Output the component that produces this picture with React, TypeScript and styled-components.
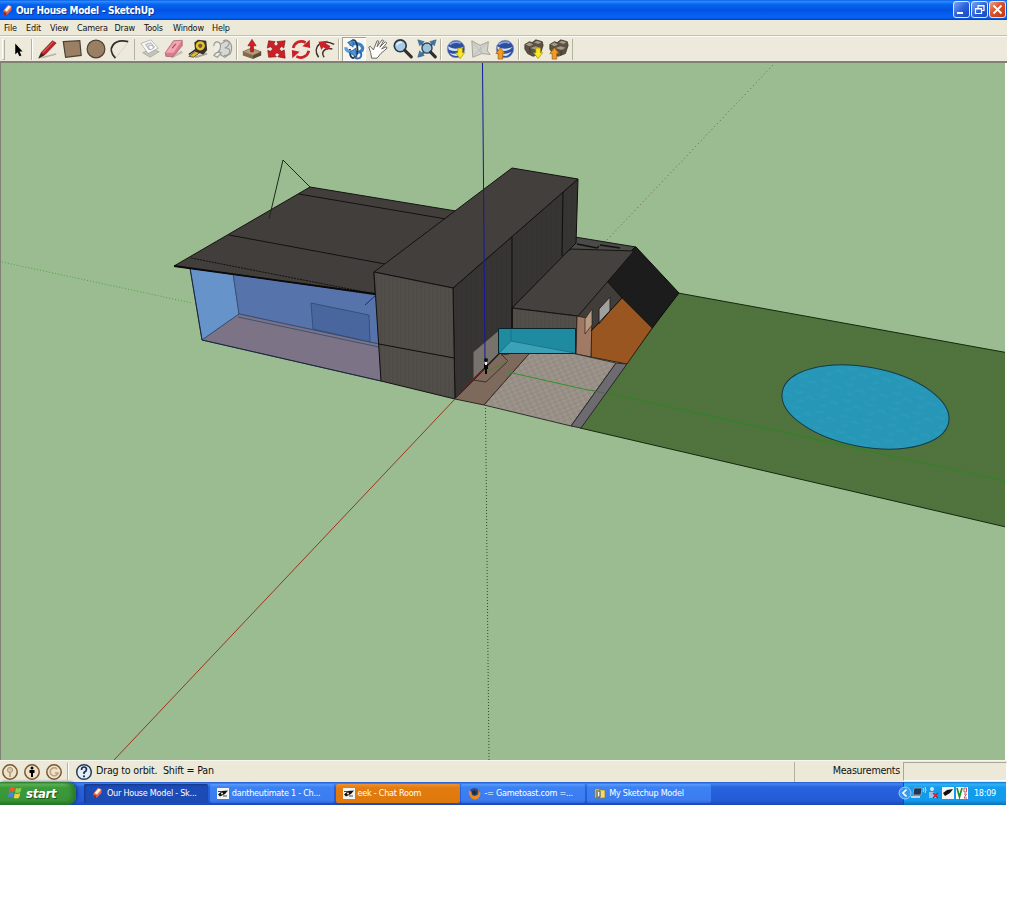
import React from 'react'
import styled, { createGlobalStyle, css } from 'styled-components'

const GlobalStyle = createGlobalStyle`
  * { box-sizing: border-box; }
  body { margin: 0; background: #fff; font-family: "DejaVu Sans Condensed", "DejaVu Sans", "Noto Sans", sans-serif; }
`

const Desktop = styled.div`
  width: 1007px;
  height: 805px;
  display: flex;
  flex-direction: column;
  overflow: hidden;
`

const TitleBar = styled.header`
  height: 20px;
  flex-shrink: 0;
  display: flex;
  align-items: center;
  background: linear-gradient(180deg, #0a5be0 0%, #2a8bff 7%, #0764ec 22%, #0054e3 50%, #0560f4 78%, #0564f8 88%, #023fb5 100%);
  padding: 0 1px 0 1px;
`

const Title = styled.h1`
  margin: 0 auto 0 2px;
  font-size: 10px;
  font-weight: 700;
  letter-spacing: -0.28px;
  color: #fff;
  text-shadow: 1px 1px 0 #0a318f;
  white-space: nowrap;
`

const WindowButtons = styled.div`display: flex; gap: 1px; padding-bottom: 1px;`

const WindowButton = styled.button<{ $close?: boolean }>`
  width: 17px; height: 17px; padding: 0;
  border: 1px solid #dce8ff;
  border-radius: 3px;
  background: ${({ $close }) => $close
    ? 'linear-gradient(135deg, #eba088, #d9512b 45%, #b83a16)'
    : 'linear-gradient(135deg, #7fa6f5, #2c62dc 50%, #1a48bd)'};
  svg { display: block; }
`

const MenuBar = styled.nav`
  height: 16px;
  flex-shrink: 0;
  display: flex;
  background: #ece9d8;
  border-bottom: 1px solid #c4c1b0;
  padding-left: 4px;
`

const MenuItem = styled.span<{ $w: number }>`
  width: ${({ $w }) => $w}px;
  font-size: 9px;
  line-height: 16px;
  letter-spacing: -0.18px;
  color: #111;
  white-space: nowrap;
`

const ToolBar = styled.div`
  height: 27px;
  flex-shrink: 0;
  display: flex;
  align-items: center;
  background: #edeadb;
  border-top: 1px solid #fbfaf4;
  border-bottom: 2px solid #7f8175;
`

const Grip = styled.i`
  width: 3px; height: 21px; margin: 0 1px 0 2px;
  border: 1px solid #fff; border-right-color: #b2ae9e; border-bottom-color: #b2ae9e;
`

const Tool = styled.button<{ $active?: boolean }>`
  width: 24.4px; height: 24px; padding: 0 0 1px; border: 0; background: none;
  display: flex; align-items: center; justify-content: center;
  ${({ $active }) => $active && css`
    background: #f8f7f1;
    box-shadow: inset 1px 1px 0 #a5a294, inset -1px -1px 0 #fff;
  `}
  svg { display: block; width: 22px; height: 22px; overflow: visible; }
`

const Separator = styled.i`
  width: 4.7px; height: 21px;
  background: linear-gradient(90deg, transparent 20%, #b5b1a1 20%, #b5b1a1 42%, #fff 42%, #fff 62%, transparent 62%);
`

const Viewport = styled.main`
  height: 697px; flex-shrink: 0;
  background: #9bbc90;
  border-left: 1px solid #7f8175;
  width: 1005px;
  overflow: hidden;
  svg { display: block; margin: -1px 0 0 -1px; }
`

const StatusBar = styled.footer`
  height: 22px; flex-shrink: 0;
  display: flex; align-items: center;
  background: #ece9d8;
  border-top: 1px solid #f7f5ec;
  font-size: 10px;
  color: #111;
  padding-left: 1px;
  svg { flex-shrink: 0; }
`

const StatusText = styled.span`
  margin: 0 0 3px 4px; font-family: "DejaVu Sans", sans-serif; font-size: 9.6px; letter-spacing: -0.22px; white-space: pre;
`

const StatusRule = styled.i`width: 1px; height: 17px; background: #b4b0a0; box-shadow: 1px 0 0 #fff;`

const Measure = styled.label`
  margin-left: auto; width: 213px; height: 20px;
  border-left: 1px solid #b4b0a0;
  display: flex; align-items: center; justify-content: flex-end; gap: 3px;
  font-family: "DejaVu Sans", sans-serif; font-size: 9.6px; letter-spacing: -0.3px;
  span { padding-bottom: 3px; }
`

const MeasureBox = styled.output`
  width: 104px; height: 19px;
  border: 1px solid #aaa799; border-right-color: #fff; border-bottom-color: #fff;
`

const TaskBar = styled.div`
  height: 23px; flex-shrink: 0;
  display: flex; width: 1006px;
  background: linear-gradient(180deg, #2458c8 0%, #4287f0 8%, #2862dc 22%, #245bd7 80%, #1b47b4 100%);
`

const StartButton = styled.button`
  width: 76px; height: 23px; border: 0; padding: 0 0 1px 7px;
  display: flex; align-items: center; gap: 3px;
  border-radius: 0 9px 9px 0;
  background: linear-gradient(180deg, #2f7e2f 0%, #63b85c 9%, #3b9a3a 25%, #379537 80%, #246e25 100%);
  box-shadow: inset -4px 0 4px #2c7a2b, 2px 0 3px #173f9d;
  font: italic 700 13px "DejaVu Sans Condensed", sans-serif;
  letter-spacing: -0.3px;
  color: #fff;
  text-shadow: 1px 1px 1px #1c501b;
  margin-right: 8px;
`

const Task = styled.button<{ $state?: 'active' | 'alert' }>`
  width: 124px; height: 19px; margin: 2px 1.8px 0 0; padding: 0 0 1px 7px;
  border: 0; border-radius: 2px;
  display: flex; align-items: center; gap: 3px;
  font: 9px "DejaVu Sans Condensed", sans-serif;
  letter-spacing: -0.25px;
  color: #fff;
  white-space: nowrap;
  background: linear-gradient(180deg, #5a9bff 0%, #3c81f3 18%, #3b7cf0 85%, #2f69d8 100%);
  ${({ $state }) => $state === 'active' && css`
    background: #1c4bb6;
    box-shadow: inset 1px 1px 2px #123586;
  `}
  ${({ $state }) => $state === 'alert' && css`
    background: linear-gradient(180deg, #ef9231 0%, #e27c10 20%, #e0790c 100%);
  `}
  svg { flex-shrink: 0; }
`

const Tray = styled.div`
  width: 103px; margin-left: auto; height: 23px;
  display: flex; align-items: center;
  background: linear-gradient(180deg, #0d76cf 0%, #32b2f5 9%, #139ceb 25%, #129bec 80%, #0c70ba 100%);
  border-left: 1px solid #0d52a8;
  font-size: 9px; letter-spacing: -0.3px; color: #fff;
  padding-bottom: 1px;
  svg { margin-left: -7px; overflow: visible; }
`

const Clock = styled.time`margin-left: 2px;`

const Crayon = () => (
  <svg width="13" height="14" viewBox="0 0 13 14">
    <path d="M2 8 7 1.800 10.500 3.300 10.500 7 5.500 12 2.500 11.500Z" fill="#df6b50" />
    <path d="M3.500 7 7.500 2.500 10 3.800 6 8.500Z" fill="#fff1e6" />
    <path d="M2 8.500 5.500 10 5 12.500 2.500 11.500Z" fill="#8e2a20" />
  </svg>
)

const ChatIcon = () => (
  <svg width="12" height="11" viewBox="0 0 12 11">
    <rect width="12" height="11" fill="#f5f5f2" />
    <path d="M1 6.500 5 3 11 2.500 8 6 3 8.500Z" fill="#111" />
    <path d="M1 3.500h4M6 8h4" stroke="#444" strokeWidth="1" />
    <circle cx="5" cy="5.500" r="1" fill="#eee" />
  </svg>
)

const Globe = () => (
  <>
    <circle cx="12" cy="12" r="9.500" fill="#2e4e9f" stroke="#8a93b0" strokeWidth=".7" />
    <path d="M3.500 9Q10 14 20.500 9.500 14 17 4 12.500ZM5 16q7 3 14-1-3 4-6 4.500-5 0-8-3.500Z" fill="#d7e5f8" />
    <path d="M5 7Q11 3 17 5.500" stroke="#83a6df" strokeWidth="2" fill="none" />
  </>
)

const DownArrow = () => <path d="M14 11h5v5h2.500l-5 6.500-5-6.500H14Z" fill="#fbe720" stroke="#9b8a12" strokeWidth=".7" />
const UpArrow = () => <path d="M4.500 23h5v-6H12L7 10.500 2 17h2.500Z" fill="#f49a20" stroke="#8e570f" strokeWidth=".7" />

const Boxes = () => (
  <>
    <path d="m2 7 5-3 3 1 4-3 7 2 1 4-3 9-8 3-6-3-3-5Z" fill="#5c5244" stroke="#332d25" strokeWidth=".8" />
    <path d="m3 7 4-2 4 2-4 2ZM12 5l3-2 5 1.500-3 2ZM8 11l6-2 5 1.500-4 2.500Z" fill="#a59a84" />
    <path d="m7 10 1 7M15 13l-1 6" stroke="#3c352b" />
  </>
)

type ToolDef = { name: string; art: React.ReactNode; active?: boolean }

const toolGroups: ToolDef[][] = [
  [
    { name: 'Select', art: <path d="M9 6v12l2.500-2.500 2 4.500 2.200-1-2-4.300H17Z" fill="#000" /> },
  ],
  [
    { name: 'Line', art: <><path d="m6 21.500 16-4" stroke="#b5b2a5" strokeWidth="1.500" /><path d="m3 22 3-6.500L18 3l4 2.500L10 18Z" fill="#c41f25" stroke="#671519" strokeWidth=".7" /><path d="m7.500 16 11.500-12" stroke="#ef7670" /><path d="m3 22 2.500-5.500L9 18.500Z" fill="#31271f" /></> },
    { name: 'Rectangle', art: <path d="m2.500 4 18-1 1.500 16-17 2Z" fill="#9b7f62" stroke="#4b4034" strokeWidth="1.300" /> },
    { name: 'Circle', art: <circle cx="12" cy="12" r="9.700" fill="#9b7f62" stroke="#4b4034" strokeWidth="1.300" /> },
    { name: 'Arc', art: <><path d="M7 22C-3 12 5 0 21 4" fill="none" stroke="#34302b" strokeWidth="2" /><path d="M8 21 20 6" stroke="#c9c5b7" strokeWidth=".7" /></> },
  ],
  [
    { name: 'Make Component', art: <g stroke="#a3a3a0" strokeWidth=".8"><path d="m4 16 10-4 8 3-10 6Z" fill="#c4c4bf" /><path d="m2 6 11-4 8 9-11 6Z" fill="#fafafa" /><path d="m7 7 6-2 4 5-6 3Z" fill="#ddd" /><path d="m10 9 4-1 2 3-4 2Z" fill="#fff" /></g> },
    { name: 'Eraser', art: <><path d="m9 21 12-6" stroke="#c6c0b3" strokeWidth="3" /><path d="m2.500 16 9-13 9.500-.5v6l-10 12-8-.5Z" fill="#d97b8d" stroke="#98566a" strokeWidth=".7" /><path d="m3 16 9-12.500 8.500-.5-9 13Z" fill="#f2a5b1" /><path d="m10 11 4-4.500" stroke="#a54b63" strokeWidth="1.300" /></> },
    { name: 'Tape Measure', art: <><path d="m9 21 13-4" stroke="#aaa598" strokeWidth="2" /><path d="m2 20 8-6 4 2-7 5Z" fill="#e0b92f" stroke="#3a3016" strokeWidth=".8" /><path d="m2 18 7-5" stroke="#222" strokeWidth="1.500" /><path d="m8 5 4-3 9 1 1 10-4 5-9-3Z" fill="#34312a" /><circle cx="14.500" cy="8.500" r="5" fill="#e9bf2b" /><circle cx="14.500" cy="8.500" r="2.300" fill="#6b5c3a" /></> },
    { name: 'Paint Bucket', art: <g fill="none" stroke="#999994" strokeWidth="1.200"><path d="m9 7 6-4c6 0 8 7 5 14l-6 4-7-4Z" fill="#d7d7d3" /><path d="M12 3c8-3 9 5 2 8 8-1 7 9-1 8" /><path d="M2 9C2 3 8 3 9 7s-1 8-5 10M2 19q3-5 8-3l-4 5Z" fill="#ecece9" /></g> },
  ],
  [
    { name: 'Push/Pull', art: <><path d="m2 15 9-4 11 4-9 4Z" fill="#b69b79" stroke="#594934" strokeWidth=".6" /><path d="m2 15 11 4v4L2 19Z" fill="#816a4d" /><path d="m22 15-9 4v4l9-4Z" fill="#594833" /><path d="M10.500 15V8.500h-3L12 1.500l4.500 7h-3V15Z" fill="#d91b22" stroke="#851014" strokeWidth=".7" /></> },
    { name: 'Move', art: <><path d="m4 3 7 1-1.500 2.500L12 9l2.500-2.500L13 4l9-1-1.500 8-2.500-2-2.500 3 2.500 2.500 3-1.500 1 9-8-1.500 2-2.500-3-2-2.500 2.500 2 2L4 21l-1-7.500 3 1L8.500 12 6 9.500 2.500 11Z" fill="#cb2028" stroke="#7d1418" strokeWidth=".7" /></> },
    { name: 'Rotate', art: <g fill="none" stroke="#c92229" strokeWidth="3"><path d="M3.500 11A9 9 0 0 1 17 5" /><path d="M20.500 14A9 9 0 0 1 7 20" /><path d="m21.500 2 .5 9-8.500-2ZM2.500 22 2 13l8.500 2Z" fill="#c92229" stroke="none" /></g> },
    { name: 'Offset', art: <><path d="M5 21C-3 9 9 0 22 7" fill="none" stroke="#382e29" strokeWidth="1.600" /><path d="M11 21c-4-6 1-11 9-9" fill="none" stroke="#47312c" strokeWidth="1.600" /><path d="m15 13-5-3-2 3-3-9 10-1-2 3 5 3Z" fill="#c82128" /></> },
  ],
  [
    {
      name: 'Orbit', active: true, art: <>
        <path d="M7 7q13-3 14.500 4 0 5-9 5" fill="none" stroke="#3982cc" strokeWidth="3.500" />
        <path d="M9 3.500Q14 0 15.500 8 17 20 11 22 7 21 7.500 12" fill="none" stroke="#25354f" strokeWidth="2" />
        <path d="M3 10q0 5 8 5.500" fill="none" stroke="#5b9fdf" strokeWidth="3.500" />
        <path d="m14 11-7 5 8 5Z" fill="#4b93d9" stroke="#204673" strokeWidth=".7" />
        <path d="m5 5 6-3 0 8Z" fill="#4b93d9" stroke="#204673" strokeWidth=".7" />
        <path d="M18 14q4 5 0 8-4 1-5-1" fill="none" stroke="#2f6eb5" strokeWidth="2" />
      </>,
    },
    { name: 'Pan', art: <path d="M5 22 4 16 2 10l1.500-1L7 13l4-10 1.800.5L11 9.500 16.500 2l1.700 1L14 10l6-6 1.500 1.500L16 12l5-2.500 1 1.500-7 6-4 5Z" fill="#fff" stroke="#5c5953" strokeWidth="1" /> },
    { name: 'Zoom', art: <><circle cx="9" cy="8.500" r="6.500" fill="#a9cbe4" stroke="#293849" strokeWidth="1.800" /><path d="M5 8q2-4 6-3" fill="none" stroke="#e8f5fc" strokeWidth="1.500" /><path d="m14 13.500 7 7" stroke="#332f2c" strokeWidth="3.500" strokeLinecap="round" /></> },
    { name: 'Zoom Extents', art: <><path d="m2 2 7 2-5 4.500ZM22 2l-7 2 5 4.500ZM2 21l2-7 5 5Z" fill="#4c87b3" stroke="#254b69" strokeWidth=".6" /><path d="m4 4 5 5M20 4l-5 5M4 20l5-5" stroke="#3c719b" strokeWidth="2.500" /><circle cx="12" cy="11" r="5.500" fill="#99c4dc" stroke="#304253" strokeWidth="1.500" /><path d="m16 15.500 5 5" stroke="#302e2a" strokeWidth="3.500" strokeLinecap="round" /></> },
  ],
  [
    { name: 'Get Current View', art: <><Globe /><DownArrow /></> },
    { name: 'Toggle Terrain', art: <><path d="m2 3 9 5 9-4-1 10 3 4-9-1-10 4Z" fill="#d2d2cc" stroke="#999992" strokeWidth=".9" /><path d="M3 20 20 4M11 8l2 9M2 3l11 14" stroke="#b2b2ac" strokeWidth=".7" /></> },
    { name: 'Place Model', art: <><Globe /><UpArrow /></> },
  ],
  [
    { name: 'Get Models', art: <><Boxes /><DownArrow /></> },
    { name: 'Share Model', art: <><Boxes /><UpArrow /></> },
  ],
]

const menus: [string, number][] = [
  ['File', 22], ['Edit', 24], ['View', 27], ['Camera', 37.5], ['Draw', 29.5], ['Tools', 29], ['Window', 39], ['Help', 30],
]

const HouseModel = () => (
  <svg width="1005" height="698" viewBox="0 62 1005 698">
    <defs>
      <pattern id="siding" width="4" height="8" patternUnits="userSpaceOnUse">
        <rect width="4" height="8" fill="#524e4a" /><path d="M1 0v8" stroke="#4c4844" />
      </pattern>
      <pattern id="sideDark" width="5" height="8" patternUnits="userSpaceOnUse">
        <rect width="5" height="8" fill="#373533" /><path d="M1.500 0v8" stroke="#353331" />
      </pattern>
      <pattern id="paving" width="8" height="6" patternUnits="userSpaceOnUse" patternTransform="skewX(-20) rotate(12)">
        <rect width="8" height="6" fill="#9d958b" /><path d="M0 0h4v3h-4zM4 3h4v3h-4z" fill="#948b82" />
      </pattern>
      <pattern id="grass" width="5" height="4" patternUnits="userSpaceOnUse">
        <rect width="5" height="4" fill="#51743e" /><path d="M0 1h2M3 3h2" stroke="#4f713d" />
      </pattern>
      <pattern id="water" width="24" height="16" patternUnits="userSpaceOnUse">
        <rect width="24" height="16" fill="#2797b8" /><path d="M1 3q5 3 9 0M13 9q5-3 9 1M5 14l6-2" stroke="#329fc0" strokeWidth="2" fill="none" opacity=".35" />
      </pattern>
    </defs>

    {/* axes behind the model */}
    <path d="M2 262 192 303" stroke="#4aa545" strokeDasharray="1 2" />
    <path d="M773 65 605 242" stroke="#735d51" strokeDasharray="1 3" />

    {/* garden and pool */}
    <path d="M678 293 1006 352.500V527L580 428Z" fill="url(#grass)" stroke="#16270f" />
    <ellipse cx="865.500" cy="407" rx="84.600" ry="39.800" transform="rotate(10.350 865.500 407)" fill="url(#water)" stroke="#123c48" />
    <path d="M602 392 1005 481" stroke="#2f8427" strokeWidth="1.200" />

    {/* glass room */}
    <g stroke="#31476f" strokeWidth=".8">
      <path d="M190 268 233 273 239 314 202 340Z" fill="#6694ca" />
      <path d="M233 273 376 295 379 344 239 314Z" fill="#5673ab" />
      <path d="M202 340 239 314 379 344 381 381Z" fill="#7c7386" />
      <path d="M311 303 369 315 370 342 313 329Z" fill="#4a669f" />
      <path d="M238 317 379 347" />
    </g>
    <path d="M190 268 202 340 381 381" fill="none" stroke="#1b2536" />
    <path d="M365 305 376 295" stroke="#162d7f" />

    {/* left roof */}
    <path d="M174 266 310 187 456 211 440 235 374 272 375 294Z" fill="#423e3c" stroke="#151413" />
    <path d="M299 194 446 219M229 235 385 264" stroke="#131211" />
    <path d="M191 258 375 294" stroke="#111" strokeDasharray="2 1" />
    <path d="M174 266 375 294" stroke="#0a0a0a" strokeWidth="1.800" />
    <path d="M310 187 283 160 269 219" fill="none" stroke="#1d2a1a" />

    {/* low wing */}
    <path d="M575 237 636 247 634 252 566 251Z" fill="#4a4a49" stroke="#171717" />
    <path d="m577 244 20 4 2-2M600 245l20 3" stroke="#111" strokeWidth="1.300" fill="none" />
    <path d="M636 247 679 293 652 328 607 282 634 248Z" fill="#1d1c1c" stroke="#0c0c0c" />
    <path d="M577 316 636 248 607 281 622 298 591 331 591 357 576 354Z" fill="#403d3a" />
    <path d="M622 298 652 328 627 364 591 357 591 331Z" fill="#9a5621" stroke="#37220f" />
    <path d="M512 308 550 262 571 249 634 251 578 316Z" fill="#45413f" stroke="#141312" />
    <path d="M512 308 577 316 576 354 512 341Z" fill="url(#siding)" stroke="#141312" />
    <path d="M577 316 592 319 591 357 576 354Z" fill="#a07a64" stroke="#332720" />
    <path d="M585 319 592 309 592 325 585 334Z" fill="#b89a83" stroke="#282320" strokeWidth=".7" />
    <path d="M599 309 610 297 610 311 599 324Z" fill="#a19f9b" stroke="#282320" />
    <path d="M607 281 622 298M591 331 622 298" stroke="#151311" />

    {/* patio */}
    <path d="M455 399 473 379 512 340 536 346 484 405Z" fill="#7e6a5d" stroke="#2e251f" />
    <path d="M536 346 576 354 616 363 571 426 484 405Z" fill="url(#paving)" stroke="#33302c" />
    <path d="M616 363 627 364 581 428 571 426Z" fill="#6e6b70" stroke="#2a282a" />
    <path d="M508 372 590 390.500" stroke="#33922b" />
    <path d="M590 390 604 393" stroke="#38783a" />

    {/* tower */}
    <path d="M453 288 578 179 576 243 512 308 512 341 455 399Z" fill="url(#sideDark)" stroke="#0f0f0f" />
    <path d="M374 272 512 168 578 179 453 288Z" fill="#433f3d" stroke="#131211" />
    <path d="M374 272 453 288 455 399 381 381Z" fill="url(#siding)" stroke="#121110" />
    <path d="M379 344 454 358M512 237V341M563 192 562 256" stroke="#0e0d0d" fill="none" />
    <path d="M473 352 499 330 499 353 473 379Z" fill="#78726d" stroke="#37332f" />
    <path d="M473 380 486 382 508 361 501 354M509 354l-8 1" fill="none" stroke="#3c3129" />
    <path d="M486 372 508 361" stroke="#557b38" />

    {/* glass balustrade */}
    <path d="M498.500 328.500H575.500V353.500H498.500Z" fill="#1f8ba0" stroke="#06222a" />
    <path d="M511 341 575 353H500Z" fill="#3aa1b7" />
    <path d="M499 353 511 341V329M511 341 575 353" fill="none" stroke="#196c80" strokeWidth=".8" />

    {/* axes */}
    <path d="M482.500 62 485 362" stroke="#17179a" />
    <path d="M485.500 405 489 760" stroke="#2d4930" strokeDasharray="1 2" />
    <path d="M482 371 455 399" stroke="#7e1f17" />
    <path d="M455 399 114 760" stroke="#9b351f" />
    <path d="M484 364h4v5h-1v5h-2v-5h-1Z" fill="#080808" />
    <circle cx="486" cy="360" r="2" fill="#111" />
    <path d="M485 362h2v3h-2Z" fill="#eee" />
  </svg>
)

const Badge = ({ kind }: { kind: 'pin' | 'person' | 'c' }) => (
  <svg width="22" height="18" viewBox="0 0 22 18">
    <circle cx="9" cy="9" r="7.200" fill="#eee2cb" stroke="#79582f" strokeWidth="1.500" />
    {kind === 'pin' && <><circle cx="9" cy="7" r="2.600" fill="#d9c7aa" stroke="#b09a77" /><path d="M9 9v5" stroke="#b09a77" strokeWidth="1.500" /></>}
    {kind === 'person' && <><circle cx="9" cy="5" r="1.500" /><path d="M6.500 7h5v3H10v4H8v-4H6.500Z" /></>}
    {kind === 'c' && <path d="M12 6a4 4 0 1 0 1 4h-3" fill="none" stroke="#b9a27e" strokeWidth="1.500" />}
  </svg>
)

export default function App() {
  return (
    <>
      <GlobalStyle />
      <Desktop>
        <TitleBar>
          <Crayon />
          <Title>Our House Model - SketchUp</Title>
          <WindowButtons>
            <WindowButton aria-label="Minimize">
              <svg width="15" height="15"><path d="M3 11h6" stroke="#fff" strokeWidth="2" /></svg>
            </WindowButton>
            <WindowButton aria-label="Restore">
              <svg width="15" height="15"><path d="M6 6V3.500h6v5h-2M3.500 6.500h6v5h-6zM3.500 7h6M6 4h6" fill="none" stroke="#fff" strokeWidth="1.200" /></svg>
            </WindowButton>
            <WindowButton $close aria-label="Close">
              <svg width="15" height="15"><path d="m3.500 3.500 8 8m0-8-8 8" stroke="#fff" strokeWidth="1.800" /></svg>
            </WindowButton>
          </WindowButtons>
        </TitleBar>

        <MenuBar>
          {menus.map(([label, w]) => <MenuItem key={label} $w={w}>{label}</MenuItem>)}
        </MenuBar>

        <ToolBar>
          <Grip />
          {toolGroups.map((group, i) => (
            <React.Fragment key={i}>
              {group.map(t => (
                <Tool key={t.name} $active={t.active} aria-label={t.name}>
                  <svg viewBox="0 0 24 24">{t.art}</svg>
                </Tool>
              ))}
              <Separator />
            </React.Fragment>
          ))}
        </ToolBar>

        <Viewport><HouseModel /></Viewport>

        <StatusBar>
          <Badge kind="pin" /><Badge kind="person" /><Badge kind="c" />
          <StatusRule />
          <svg width="24" height="18" viewBox="0 0 24 18">
            <circle cx="16" cy="9" r="7.300" fill="#e6eef5" stroke="#263f5b" strokeWidth="1.500" />
            <path d="M13.500 7q0-3 2.500-3t2.500 2.500q0 1.500-2.500 3V11" fill="none" stroke="#17314f" strokeWidth="1.700" />
            <circle cx="16" cy="13.300" r="1.100" fill="#17314f" />
          </svg>
          <StatusText>Drag to orbit.  Shift = Pan</StatusText>
          <Measure><span>Measurements</span><MeasureBox /></Measure>
        </StatusBar>

        <TaskBar>
          <StartButton>
            <svg width="16" height="16" viewBox="0 0 16 16">
              <path d="M3 3q2-2 5-.5L7 7Q4.500 5.500 2 7Z" fill="#ec5b2c" />
              <path d="M9 3q2.500 1 5.500-.5L13.500 7Q11 8.500 8 7.500Z" fill="#8cd04b" />
              <path d="M1.800 8q2.500-1.500 5 0l-1 4.500Q3.500 11 1 12.500Z" fill="#4a83e8" />
              <path d="M7.800 8.500q2.700 1 5.400-.5l-1 4.500Q9.500 14 6.800 13Z" fill="#f6cf3b" />
            </svg>
            start
          </StartButton>
          <Task $state="active"><Crayon />Our House Model - Sk...</Task>
          <Task><ChatIcon />dantheutimate 1 - Ch...</Task>
          <Task $state="alert"><ChatIcon />eek - Chat Room</Task>
          <Task>
            <svg width="13" height="13" viewBox="0 0 13 13">
              <circle cx="6.500" cy="6.500" r="5.500" fill="#314c86" />
              <path d="M1 3q-1 8 5 9.500 6 0 6.500-6L10 1.500Q12 8 7 9 3 9 3.500 5Z" fill="#ef8a21" />
              <path d="M4 4q3-2 5 1L7 8 4.500 7Z" fill="#202b4c" />
            </svg>
            -= Gametoast.com =...
          </Task>
          <Task>
            <svg width="12" height="12" viewBox="0 0 12 12">
              <path d="M1 2h4l1 1h5v8H1Z" fill="#f5db69" stroke="#8a752b" strokeWidth=".7" />
              <path d="M3 3v8M4 4h2v6H4" stroke="#2d3f64" fill="#fff" />
            </svg>
            My Sketchup Model
          </Task>
          <Tray>
            <svg width="75" height="18" viewBox="0 0 75 18">
              <circle cx="8" cy="9" r="6" fill="#3799ef" stroke="#b5dcff" strokeWidth=".8" />
              <path d="M9.500 5.500 6 9l3.500 3.500" fill="none" stroke="#fff" strokeWidth="1.700" />
              <path d="M17 4h8l-1 7h-8Z" fill="#223553" stroke="#a9bdd6" strokeWidth=".7" />
              <path d="M14 13h9" stroke="#c5d0dc" strokeWidth="2" />
              <path d="M26 4q2 2 0 4M28 3q2 3 0 6" fill="none" stroke="#d7eeff" strokeWidth=".8" />
              <circle cx="35" cy="5" r="2" fill="#d6e8f5" />
              <path d="M32 8h5l2 6h-7Z" fill="#9dc0de" />
              <path d="m36 9 5 5m0-5-5 5" stroke="#c4202c" strokeWidth="1.500" />
              <rect x="45" y="3" width="12" height="12" fill="#f6f6f3" />
              <path d="m46 9 4-3 6-1-3 4-5 3Z" fill="#111" />
              <rect x="59" y="3" width="12" height="12" fill="#fff" />
              <path d="m60 4 2.500 9L65 4" fill="none" stroke="#238f2f" strokeWidth="1.700" />
              <path d="M67 4h2.500v4H67zM67 10h2.500l-2.500 4h3" fill="none" stroke="#c45266" />
            </svg>
            <Clock>18:09</Clock>
          </Tray>
        </TaskBar>
      </Desktop>
    </>
  )
}
